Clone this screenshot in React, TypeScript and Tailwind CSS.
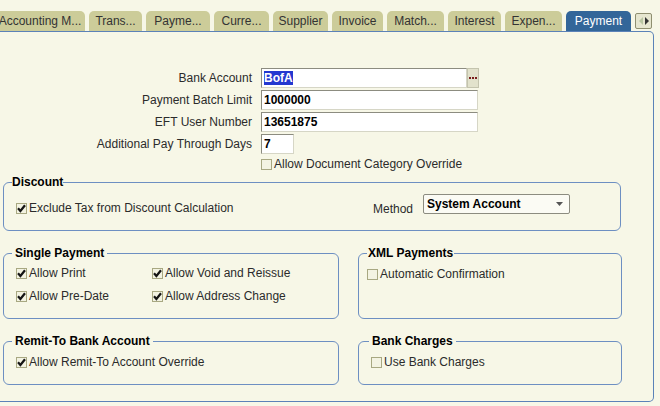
import type { ReactNode } from 'react'

const tabs = [
  { label: 'Accounting M...', w: 'w-[90px]' },
  { label: 'Trans...', w: 'w-[53px]' },
  { label: 'Payme...', w: 'w-[64px]' },
  { label: 'Curre...', w: 'w-[55px]' },
  { label: 'Supplier', w: 'w-[55px]' },
  { label: 'Invoice', w: 'w-[51px]' },
  { label: 'Match...', w: 'w-[57px]' },
  { label: 'Interest', w: 'w-[53px]' },
  { label: 'Expen...', w: 'w-[57px]' },
]

function Box({ checked }: { checked?: boolean }) {
  return (
    <span className="inline-flex w-[11px] h-[11px] shrink-0 items-center justify-center border border-[#a8a882] bg-[#f3f3e2]">
      {checked && (
        <svg width="9" height="9" viewBox="0 0 9 9">
          <path d="M1 4.2 L3.4 7 L8 1.2" fill="none" stroke="#141414" strokeWidth="2.2" />
        </svg>
      )}
    </span>
  )
}

function Check({ label, checked }: { label: string; checked?: boolean }) {
  return (
    <label className="flex items-center gap-[2px] h-[20px] text-[#2b2b2b]">
      <Box checked={checked} />
      <span>{label}</span>
    </label>
  )
}

function Group({ title, children, className = '', legend = 'ml-0 px-[3px]' }: { title: string; children: ReactNode; className?: string; legend?: string }) {
  return (
    <fieldset className={`border border-[#6d8fc2] rounded-[6px] pl-[8px] ${className}`}>
      <legend className={`font-bold text-black leading-[14px] ${legend}`}>{title}</legend>
      {children}
    </fieldset>
  )
}

const inputCls =
  'h-[20px] bg-white border border-t-[#8c8c80] border-l-[#8c8c80] border-r-[#d6d6c6] border-b-[#d6d6c6] px-[2px] font-bold text-black leading-[18px]'

export default function App() {
  return (
    <div className="w-[660px] h-[406px] overflow-hidden bg-[#f7f7e7] font-['Liberation_Sans',Arial,sans-serif] text-[12px] text-[#2b2b2b]">
      {/* tab strip */}
      <div className="flex items-end gap-[4px] pt-[11px] -ml-[5px] h-[31px]">
        {tabs.map(t => (
          <div
            key={t.label}
            className={`${t.w} h-[20px] shrink-0 rounded-t-[5px] bg-[#cccc99] flex items-center justify-center text-[#333]`}
          >
            {t.label}
          </div>
        ))}
        <div className="w-[65px] h-[20px] shrink-0 rounded-t-[5px] bg-[#336699] flex items-center justify-center text-white">
          Payment
        </div>
        <div className="w-[17px] h-[16px] mb-[2px] shrink-0 rounded-[2px] border border-[#8f8f70] bg-[#e6e6cf] flex items-center justify-center">
          <svg width="12" height="8" viewBox="0 0 12 8">
            <path d="M5 0 L1 4 L5 8 Z" fill="#b9c6a2" />
            <path d="M7 0 L11 4 L7 8 Z" fill="#333" />
          </svg>
        </div>
      </div>

      {/* panel */}
      <div className="w-[654px] h-[371px] border-t border-r border-b border-[#5b82b8] rounded-tr-[5px] rounded-br-[5px]">
        <div className="grid grid-cols-[252px_auto] gap-x-[9px] gap-y-[2px] pt-[36px] items-center">
          <div className="text-right">Bank Account</div>
          <div className="flex">
            <div className={`${inputCls} w-[206px]`}>
              <span className="bg-[#2438d0] text-white">BofA</span>
            </div>
            <div className="w-[12px] h-[20px] bg-[#e2e2cc] border border-[#c4c4ae] flex items-center justify-center">
              <svg width="8" height="2" viewBox="0 0 8 2">
                <rect x="0" y="0" width="2" height="2" fill="#7a1e1e" />
                <rect x="3" y="0" width="2" height="2" fill="#7a1e1e" />
                <rect x="6" y="0" width="2" height="2" fill="#7a1e1e" />
              </svg>
            </div>
          </div>
          <div className="text-right">Payment Batch Limit</div>
          <div className={`${inputCls} w-[217px]`}>1000000</div>
          <div className="text-right">EFT User Number</div>
          <div className={`${inputCls} w-[217px]`}>13651875</div>
          <div className="text-right">Additional Pay Through Days</div>
          <div className={`${inputCls} w-[33px]`}>7</div>
          <div />
          <div className="-mt-[2px]">
            <Check label="Allow Document Category Override" />
          </div>
        </div>

        <div className="ml-[3px] mt-[1px] flex flex-col gap-[15px]">
          <Group title="Discount" className="w-[618px] pb-[12px]" legend="ml-0 px-0">
            <div className="flex items-start pt-[5px] pl-[4px]">
              <div className="mt-[4px]">
                <Check label="Exclude Tax from Discount Calculation" checked />
              </div>
              <span className="ml-auto mt-[6px]">Method</span>
              <div className="ml-[10px] mr-[50px] w-[147px] h-[20px] bg-[#fbfbf4] border border-[#8c8c80] rounded-[2px] flex items-center justify-between pl-[3px] pr-[6px] font-bold text-black">
                <span>System Account</span>
                <svg width="7" height="4" viewBox="0 0 7 4">
                  <path d="M0 0 L7 0 L3.5 4 Z" fill="#555" />
                </svg>
              </div>
            </div>
          </Group>

          <div className="grid grid-cols-[336px_264px] gap-x-[19px]">
            <Group title="Single Payment" className="pb-[12px]">
              <div className="grid grid-cols-[136px_auto] gap-y-[3px] pt-[3px] pl-[4px]">
                <Check label="Allow Print" checked />
                <Check label="Allow Void and Reissue" checked />
                <Check label="Allow Pre-Date" checked />
                <Check label="Allow Address Change" checked />
              </div>
            </Group>
            <Group title="XML Payments" legend="ml-0 px-[1px]">
              <div className="pt-[4px]">
                <Check label="Automatic Confirmation" />
              </div>
            </Group>
          </div>

          <div className="grid grid-cols-[336px_264px] gap-x-[19px]">
            <Group title="Remit-To Bank Account" className="pb-[12px]">
              <div className="pt-[4px] pl-[4px]">
                <Check label="Allow Remit-To Account Override" checked />
              </div>
            </Group>
            <Group title="Bank Charges" className="pb-[12px]" legend="ml-[2px] px-[3px]">
              <div className="pt-[4px] pl-[4px]">
                <Check label="Use Bank Charges" />
              </div>
            </Group>
          </div>
        </div>
      </div>
    </div>
  )
}
